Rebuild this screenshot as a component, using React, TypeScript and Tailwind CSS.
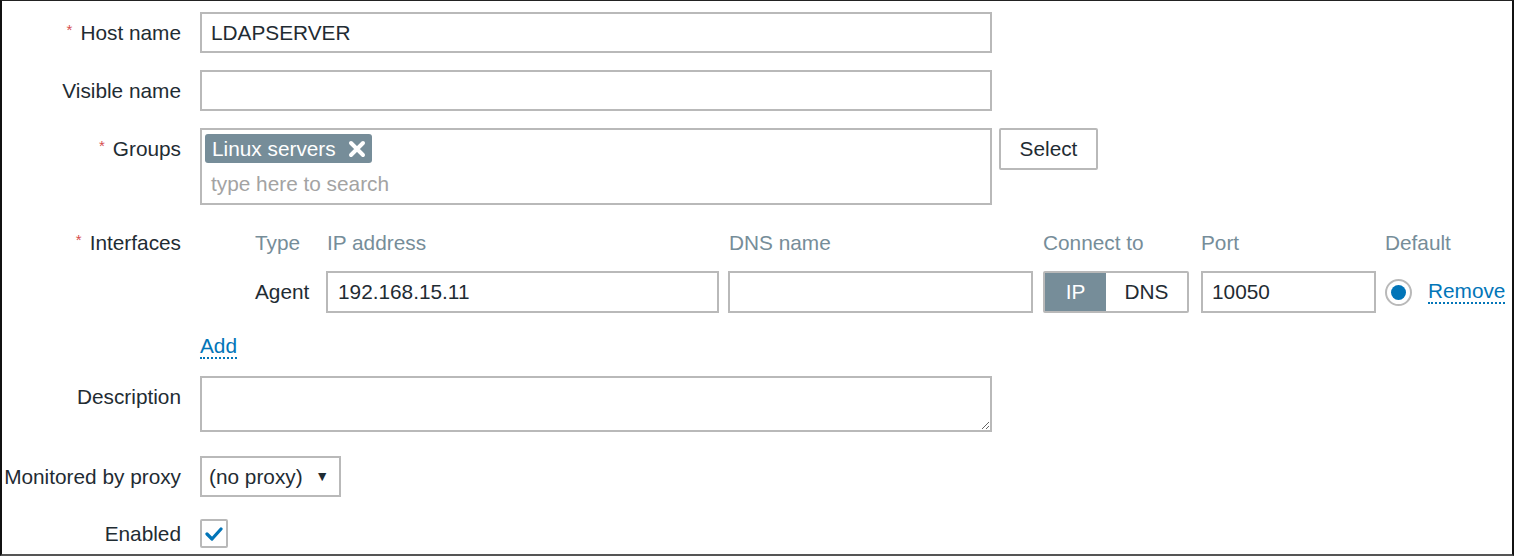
import React from "react"

const font = { fontFamily: '"Liberation Sans", Arial, sans-serif' }

function Label({ text, required }: { text: string; required?: boolean }) {
  return (
    <div className="w-[179px] shrink-0 flex justify-end items-center h-[41px] text-[20.8px] text-[#1f2c33] whitespace-nowrap">
      {required && <span className="text-[#d64e4e] text-[15px] mr-[8px] -mt-[4px]">*</span>}
      {text}
    </div>
  )
}

function Box({ className = "", children }: { className?: string; children?: React.ReactNode }) {
  return (
    <div className={`border-2 border-[#b9b9b9] bg-white flex items-center text-[20.8px] text-[#1f2c33] ${className}`}>
      {children}
    </div>
  )
}

export default function App() {
  return (
    <div
      style={font}
      className="w-[1514px] h-[556px] bg-white border-l-2 border-r-2 border-t border-b-2 border-l-[#111] border-r-[#111] border-t-[#222] border-b-[#555] overflow-hidden pt-[11px]"
    >
      {/* Host name */}
      <div className="flex gap-[19px]">
        <Label text="Host name" required />
        <Box className="w-[792px] h-[41px] pl-[9px]">LDAPSERVER</Box>
      </div>

      {/* Visible name */}
      <div className="flex gap-[19px] mt-[17px]">
        <Label text="Visible name" />
        <Box className="w-[792px] h-[41px]" />
      </div>

      {/* Groups */}
      <div className="flex gap-[19px] mt-[17px]">
        <Label text="Groups" required />
        <div className="w-[792px] h-[77px] border-2 border-[#b9b9b9] bg-white px-[3px] pt-[4px]">
          <div className="inline-flex items-center h-[29px] bg-[#768d99] rounded-[3px] pl-[7px] pr-[6px] text-white text-[20.8px]">
            Linux servers
            <svg width="18" height="18" viewBox="0 0 18 18" className="ml-[12px]">
              <path d="M3 3 L15 15 M15 3 L3 15" stroke="white" strokeWidth="4" strokeLinecap="round" />
            </svg>
          </div>
          <div className="text-[20.8px] text-[#a3a3a3] pl-[6px] mt-[5px]">type here to search</div>
        </div>
        <button className="-ml-[12px] w-[99px] h-[42px] border-2 border-[#b9b9b9] rounded-[2px] bg-white text-[20.8px] text-[#1f2c33]">
          Select
        </button>
      </div>

      {/* Interfaces */}
      <div className="flex gap-[19px] mt-[17px]">
        <div className="flex flex-col">
          <Label text="Interfaces" required />
        </div>
        <div>
          <div className="grid grid-cols-[126px_402px_315px_158px_184px_140px] h-[41px] items-center text-[20.8px] text-[#768d99]">
            <div className="pl-[55px]">Type</div>
            <div className="pl-[1px]">IP address</div>
            <div className="pl-[1px]">DNS name</div>
            <div>Connect to</div>
            <div>Port</div>
            <div>Default</div>
          </div>
          <div className="grid grid-cols-[126px_402px_315px_158px_184px_140px] mt-[8px] items-center text-[20.8px] text-[#1f2c33]">
            <div className="pl-[55px]">Agent</div>
            <Box className="w-[393px] h-[42px] pl-[10px]">192.168.15.11</Box>
            <Box className="w-[305px] h-[42px]" />
            <div className="w-[146px] h-[42px] border-2 border-[#b9b9b9] flex rounded-[2px] overflow-hidden">
              <div className="w-[61px] bg-[#768d99] text-white flex items-center justify-center">IP</div>
              <div className="flex-1 bg-white flex items-center justify-center">DNS</div>
            </div>
            <Box className="w-[175px] h-[42px] pl-[9px]">10050</Box>
            <div className="flex items-center">
              <div className="w-[27px] h-[27px] rounded-full border-2 border-[#b9b9b9] flex items-center justify-center">
                <div className="w-[15px] h-[15px] rounded-full bg-[#0275b8]" />
              </div>
              <span className="ml-[16px] text-[#0275b8] border-b-2 border-dotted border-[#0275b8] leading-[22px]">
                Remove
              </span>
            </div>
          </div>
          <div className="mt-[22px]">
            <span className="text-[20.8px] text-[#0275b8] border-b-2 border-dotted border-[#0275b8] leading-[22px]">Add</span>
          </div>
        </div>
      </div>

      {/* Description */}
      <div className="flex gap-[19px] mt-[16px]">
        <Label text="Description" />
        <textarea className="w-[792px] h-[56px] border-2 border-[#b9b9b9] bg-white outline-none" />
      </div>

      {/* Proxy */}
      <div className="flex gap-[19px] mt-[24px]">
        <Label text="Monitored by proxy" />
        <Box className="w-[141px] h-[41px] pl-[7px] justify-between pr-[10px]">
          <span>(no proxy)</span>
          <span className="text-[14px]">▼</span>
        </Box>
      </div>

      {/* Enabled */}
      <div className="flex gap-[19px] mt-[16px]">
        <Label text="Enabled" />
        <div className="flex items-center h-[41px]">
          <div className="w-[28px] h-[29px] border-2 border-[#b9b9b9] rounded-[2px] flex items-center justify-center">
            <svg width="18" height="14" viewBox="0 0 18 14">
              <path d="M2 7 L7 12 L16 2" fill="none" stroke="#0275b8" strokeWidth="3.2" strokeLinecap="round" strokeLinejoin="round" />
            </svg>
          </div>
        </div>
      </div>
    </div>
  )
}
